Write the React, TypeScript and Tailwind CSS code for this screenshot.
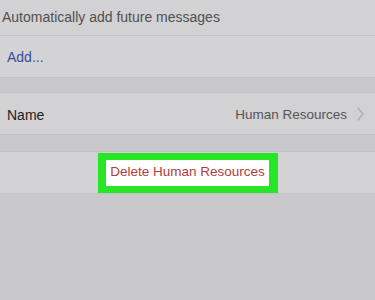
import React from 'react';

const App = () => {
  return (
    <div
      className="w-[375px] h-[300px] bg-[#c9c8cb] overflow-hidden text-[14px]"
      style={{ fontFamily: '"Liberation Sans", Arial, sans-serif' }}
    >
      <div className="h-[36px] bg-[#d2d1d3] border-b border-[#c4c3c6] flex items-center px-[2px] text-[#505050]">
        Automatically add future messages
      </div>
      <div className="h-[41px] bg-[#d3d2d4] flex items-center px-[7px] pt-[1px] text-[#3b4d9e]">
        Add...
      </div>

      <div className="h-[15px] border-t border-[#c2c1c4]"></div>

      <div className="h-[43px] bg-[#d2d1d3] border-y border-[#c4c3c6] flex items-center justify-between pl-[7px] pr-[11px] pt-[3px]">
        <span className="text-[#1e1e1e]">Name</span>
        <div className="flex items-center gap-[10px] text-[#555555] text-[13.5px]">
          <span>Human Resources</span>
          <svg width="7" height="14" viewBox="0 0 7 14" fill="none" className="-mt-[2px]">
            <path d="M1 1l5 6-5 6" stroke="#adadaf" strokeWidth="1.3" strokeLinecap="round" strokeLinejoin="round" />
          </svg>
        </div>
      </div>

      <div className="h-[16px]"></div>

      <div className="h-[43px] bg-[#d2d1d3] border-y border-[#c4c3c6] flex items-center justify-center">
        <div className="h-[40px] w-[180px] bg-[#26e626] flex items-center justify-center">
          <div className="h-[26px] w-[163px] bg-white flex items-center justify-center text-[#b03c3c] text-[13.5px]">
            Delete Human Resources
          </div>
        </div>
      </div>
    </div>
  );
};

export default App;
